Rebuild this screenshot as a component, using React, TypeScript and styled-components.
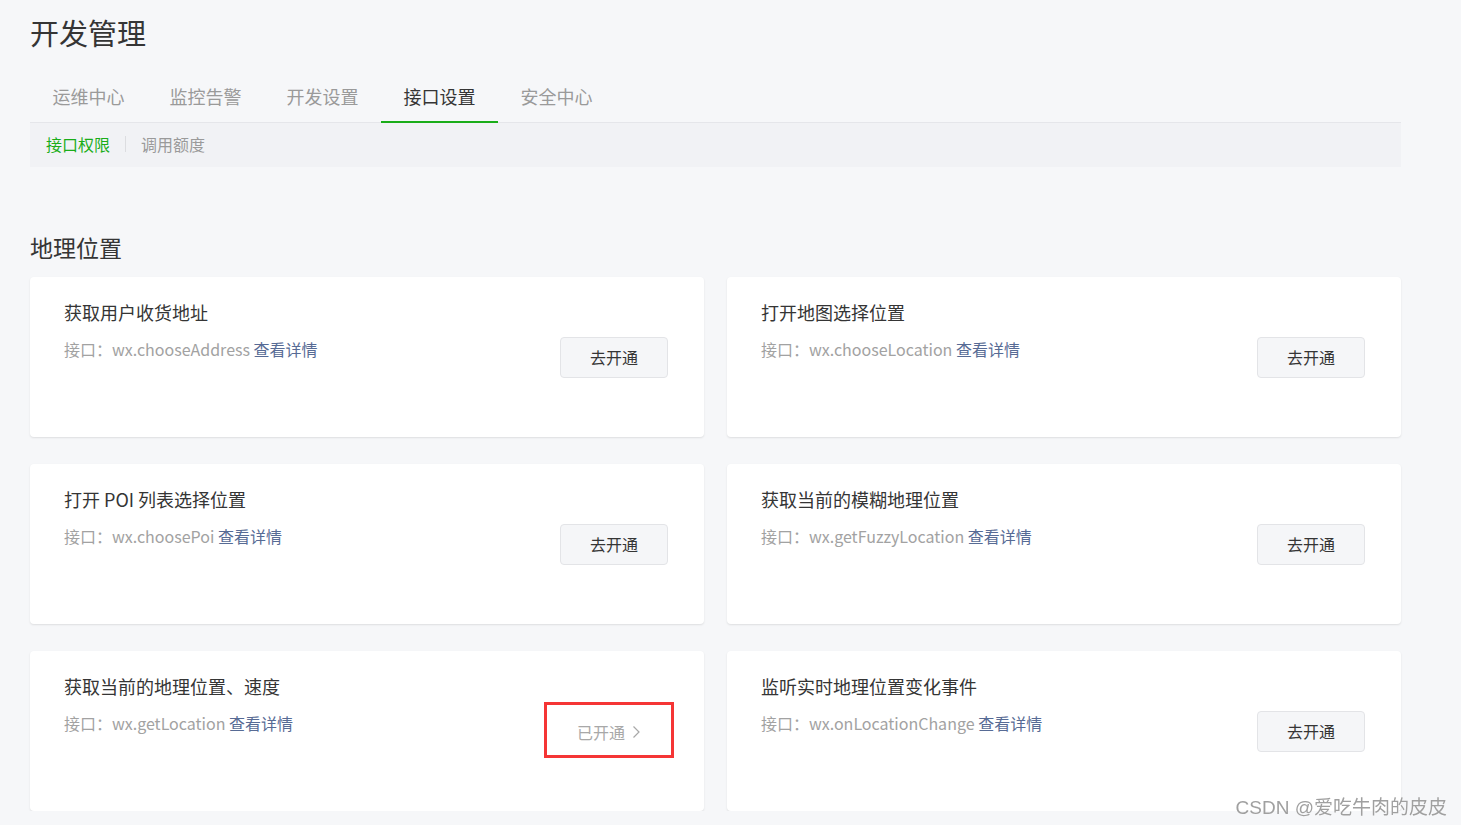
import React from "react";
import styled, { createGlobalStyle } from "styled-components";

const GlobalStyle = createGlobalStyle`
  body {
    margin: 0;
    background: #f6f7f9;
    font-family: "Noto Sans CJK SC", "Noto Sans", sans-serif;
    color: #353535;
  }
`;

const tabs = ["运维中心", "监控告警", "开发设置", "接口设置", "安全中心"];

const apis = [
  { title: "获取用户收货地址", name: "wx.chooseAddress", opened: false },
  { title: "打开地图选择位置", name: "wx.chooseLocation", opened: false },
  { title: "打开 POI 列表选择位置", name: "wx.choosePoi", opened: false },
  { title: "获取当前的模糊地理位置", name: "wx.getFuzzyLocation", opened: false },
  { title: "获取当前的地理位置、速度", name: "wx.getLocation", opened: true },
  { title: "监听实时地理位置变化事件", name: "wx.onLocationChange", opened: false },
];

export default function App() {
  return (
    <>
      <GlobalStyle />
      <SPage>
        <STitle>开发管理</STitle>

        <STabBar>
          {tabs.map((t) => (
            <STab key={t} active={t === "接口设置"}>
              {t}
            </STab>
          ))}
        </STabBar>

        <SSubNav>
          <SSubItem active>接口权限</SSubItem>
          <SSubDivider />
          <SSubItem>调用额度</SSubItem>
        </SSubNav>

        <SSectionTitle>地理位置</SSectionTitle>

        <SGrid>
          {apis.map((a) => (
            <SCard key={a.name}>
              <SCardInfo>
                <SCardTitle>{a.title}</SCardTitle>
                <SCardDesc>
                  接口：{a.name} <SLink href="#">查看详情</SLink>
                </SCardDesc>
              </SCardInfo>
              {a.opened ? (
                <SOpened>
                  已开通
                  <svg width="9" height="14" viewBox="0 0 9 14">
                    <path d="M1.5 1.5 L7 7 L1.5 12.5" fill="none" stroke="#a8a8a8" strokeWidth="1.2" />
                  </svg>
                </SOpened>
              ) : (
                <SOpenButton type="button">去开通</SOpenButton>
              )}
            </SCard>
          ))}
        </SGrid>
      </SPage>
      <SWatermark>CSDN @爱吃牛肉的皮皮</SWatermark>
    </>
  );
}

const SPage = styled.div`
  width: 1371px;
  padding-left: 30px;
`;

const STitle = styled.h1`
  margin: 0;
  padding-top: 12px;
  font-size: 29px;
  line-height: 40px;
  font-weight: 400;
  color: #353535;
`;

const STabBar = styled.div`
  display: flex;
  margin-top: 19px;
  border-bottom: 1px solid #e5e6ea;
`;

const STab = styled.div<{ active?: boolean }>`
  padding: 0 22.5px;
  height: 50px;
  line-height: 50px;
  font-size: 18px;
  margin-bottom: -1px;
  color: ${(p) => (p.active ? "#353535" : "#9a9a9a")};
  border-bottom: 2px solid ${(p) => (p.active ? "#1aad19" : "transparent")};
`;

const SSubNav = styled.div`
  display: flex;
  align-items: center;
  height: 44px;
  box-sizing: border-box;
  padding: 0 0 3px 16px;
  background: #f1f2f5;
`;

const SSubItem = styled.span<{ active?: boolean }>`
  font-size: 16px;
  color: ${(p) => (p.active ? "#1aad19" : "#9a9a9a")};
`;

const SSubDivider = styled.span`
  width: 1px;
  height: 16px;
  margin: 0 15px;
  background: #dcdde0;
`;

const SSectionTitle = styled.h2`
  margin: 64px 0 0;
  font-size: 23px;
  line-height: 32px;
  font-weight: 400;
  color: #353535;
`;

const SGrid = styled.div`
  display: grid;
  grid-template-columns: 674px 674px;
  column-gap: 23px;
  row-gap: 27px;
  margin-top: 14px;
`;

const SCard = styled.div`
  display: flex;
  align-items: center;
  justify-content: space-between;
  height: 160px;
  box-sizing: border-box;
  padding: 0 36px 0 34px;
  background: #fff;
  border-radius: 4px;
  box-shadow: 0 1px 2px rgba(0, 0, 0, 0.1);
`;

const SCardInfo = styled.div`
  align-self: flex-start;
  padding-top: 22px;
`;

const SCardTitle = styled.div`
  font-size: 18px;
  line-height: 26px;
  color: #353535;
`;

const SCardDesc = styled.div`
  margin-top: 12px;
  font-size: 16px;
  line-height: 24px;
  color: #a2a2a2;
`;

const SLink = styled.a`
  color: #576b95;
  text-decoration: none;
`;

const SOpenButton = styled.button`
  width: 108px;
  height: 41px;
  background: #f5f6f8;
  border: 1px solid #e3e4e7;
  border-radius: 4px;
  font-family: inherit;
  font-size: 16px;
  color: #353535;
  cursor: pointer;
`;

const SOpened = styled.div`
  display: flex;
  align-items: center;
  justify-content: center;
  gap: 7px;
  width: 130px;
  height: 56px;
  box-sizing: border-box;
  margin: 0 -6px 2px 0;
  padding-top: 4px;
  border: 3px solid #f53535;
  font-size: 16px;
  color: #a8a8a8;
`;

const SWatermark = styled.div`
  position: fixed;
  right: 14px;
  bottom: 6px;
  font-family: "Liberation Sans", "Noto Sans CJK SC", sans-serif;
  font-size: 19px;
  color: #a0a0a0;
  text-shadow: 0 0 1px #fff;
`;
